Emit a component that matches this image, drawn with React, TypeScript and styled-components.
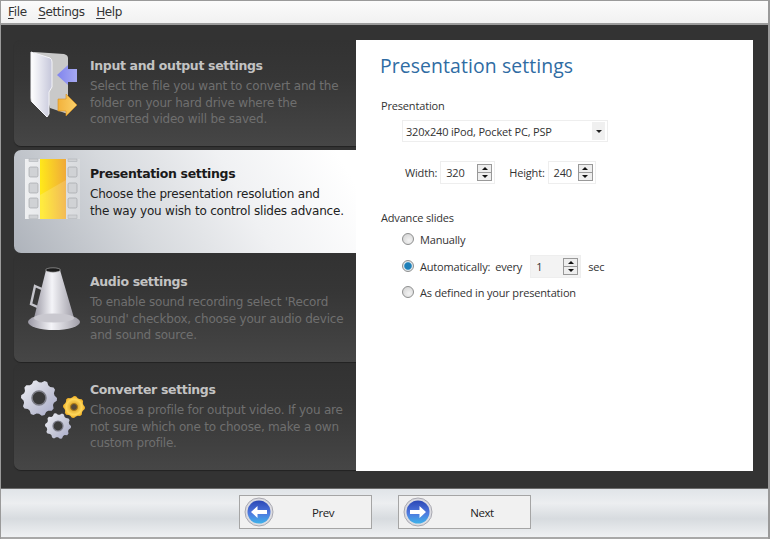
import React from "react";
import styled, { createGlobalStyle } from "styled-components";

const Global = createGlobalStyle`
  html, body { margin: 0; padding: 0; background: #333; }
  #root { width: 770px; height: 539px; }
`;

const Win = styled.div`
  width: 770px; height: 539px; box-sizing: border-box;
  display: flex; flex-direction: column; overflow: hidden;
  border: solid #9a9a9a; border-width: 1px 2px 0 1px;
  font-family: "Open Sans", "Liberation Sans", sans-serif;
  color: #222;
`;
const MenuBar = styled.div`
  height: 22px; flex: none; display: flex; align-items: center; gap: 11.5px;
  padding: 0 0 0 7px;
  background: linear-gradient(#fbfbfb, #f1f1f1);
  border-bottom: 2px solid #9c9c9c;
  font: 12px "DejaVu Sans", sans-serif; letter-spacing: -0.35px; color: #333;
`;
const MenuItem = styled.span`
  & > u { text-underline-offset: 2px; }
`;
const Stage = styled.div`
  flex: none; height: 463px; box-sizing: border-box; display: flex;
  padding: 15px 15px 0 13px; background: #333;
`;
const Side = styled.div`
  width: 342px; flex: none; display: flex; flex-direction: column;
`;
const Card = styled.div<{ $active?: boolean; $h: number; $mt: number }>`
  height: ${p => p.$h}px; margin-top: ${p => p.$mt}px; box-sizing: border-box; flex: none;
  display: flex; border-radius: 7px 0 0 7px;
  background: ${p => p.$active
    ? "linear-gradient(60deg, #aeb3bb 0%, #d6d9dd 35%, #f0f1f3 65%, #ffffff 95%)"
    : "linear-gradient(#323232, #363636 35%, #464646)"};
  box-shadow: ${p => p.$active ? "none" : "0 1px 1px #222"};
`;
const IconSlot = styled.svg`
  width: 76px; flex: none; height: 110px; display: block;
`;
const CardText = styled.div<{ $active?: boolean; $pt: number }>`
  padding-top: ${p => p.$pt}px; white-space: nowrap;
  font: 12px/16.5px "DejaVu Sans", sans-serif; letter-spacing: -0.2px;
  color: ${p => p.$active ? "#222" : "#6f6f6f"};
`;
const CardTitle = styled.div<{ $active?: boolean }>`
  font-weight: 700; font-size: 12.5px; line-height: 18px; margin-bottom: 3px;
  letter-spacing: -0.35px;
  color: ${p => p.$active ? "#1a1a1a" : "#c3c3c3"};
`;
const Panel = styled.div`
  flex: 1; height: 431px; background: #fff; box-sizing: border-box;
  padding: 10px 0 0 24px; font-size: 11px; letter-spacing: -0.17px; color: #333;
`;
const Title = styled.h1`
  margin: 0 0 17px; font: 400 19.4px/31px "Open Sans", sans-serif; color: #2f6ca3;
  letter-spacing: 0.1px;
`;
const Label = styled.div`
  line-height: 16px; padding-left: 1px;
`;
const Select = styled.div`
  margin: 6px 0 0 22px; width: 206px; height: 22px; box-sizing: border-box;
  border: 1px solid #eee; display: flex; align-items: center; justify-content: space-between;
  padding: 0 2px 0 3px;
`;
const Arrow = styled.span`
  width: 13px; height: 18px; background: #f0f0f0; display: flex; align-items: center; justify-content: center;
  &::after { content: ""; border: solid transparent; border-width: 3px 3px 0; border-top-color: #222; }
`;
const SizeRow = styled.div`
  display: flex; align-items: center; margin: 19px 0 0 25px; height: 23px;
`;
const Spin = styled.div<{ $w: number; $ml: number; $mr?: number; $fill?: boolean }>`
  width: ${p => p.$w}px; height: 23px; margin: 0 ${p => p.$mr ?? 0}px 0 ${p => p.$ml}px;
  box-sizing: border-box; border: 1px solid #eee; display: flex; align-items: center;
  justify-content: space-between; padding: 0 2px 0 5px;
  background: ${p => p.$fill ? "#f3f3f3" : "#fff"};
`;
const Stepper = styled.div`
  width: 15px; height: 17px; display: flex; flex-direction: column; border: 1px solid #999; box-sizing: border-box; background: #eee;
`;
const Step = styled.div<{ $down?: boolean }>`
  flex: 1; display: flex; align-items: center; justify-content: center;
  ${p => p.$down ? "border-top: 1px solid #999;" : ""}
  &::after {
    content: ""; border: solid transparent; border-width: ${p => p.$down ? "3px 3px 0" : "0 3px 3px"};
    ${p => p.$down ? "border-top-color: #111;" : "border-bottom-color: #111;"}
  }
`;
const SectionLabel = styled(Label)`
  margin-top: 26px;
`;
const RadioRow = styled.div<{ $mt: number }>`
  display: flex; align-items: center; height: 22px; margin: ${p => p.$mt}px 0 0 22px;
`;
const Radio = styled.span<{ $on?: boolean }>`
  width: 12px; height: 12px; border-radius: 50%; box-sizing: border-box; flex: none; margin-right: 6px;
  border: 1px solid #8e8f8f;
  background: ${p => p.$on
    ? "radial-gradient(circle, #1f7fb8 0 3px, #5aa5cf 3.6px, #dfe6ea 4.2px)"
    : "radial-gradient(circle at 60% 65%, #f3f3f3, #cfcfcf)"};
`;
const Every = styled.span`
  margin-left: 5px;
`;
const Sec = styled.span`
  margin-left: 7px;
`;
const Footer = styled.div`
  flex: 1; display: flex; gap: 26px; padding: 6px 0 0 238px; box-sizing: border-box;
  border-top: 1px solid #6b6b6b; border-bottom: 2px solid #a8a8a8;
  background: linear-gradient(#e0e4e8, #eceef0 30%, #d7dbdf 62%, #eff1f3);
`;
const NavButton = styled.div`
  width: 133px; height: 34px; box-sizing: border-box; border: 1px solid #a5a5a5;
  background: #f1f1f1; display: flex; align-items: center; padding-left: 4px;
  font-size: 11.5px; color: #222; letter-spacing: -0.4px;
`;
const NavLabel = styled.span`
  flex: 1; text-align: center; padding-left: 1px;
`;

function gear(cx: number, cy: number, r: number, teeth: number) {
  const pts: string[] = [];
  const n = teeth * 4;
  for (let i = 0; i < n; i++) {
    const a = (i / n) * Math.PI * 2;
    const R = i % 4 < 2 ? r : r * 0.87;
    pts.push(`${(cx + R * Math.cos(a)).toFixed(1)},${(cy + R * Math.sin(a)).toFixed(1)}`);
  }
  return pts.join(" ");
}

const FolderIcon = () => (
  <IconSlot viewBox="0 0 76 110">
    <defs>
      <linearGradient id="folderLeaf" x1="0" x2="1"><stop offset="0" stopColor="#fff" /><stop offset="1" stopColor="#c5c6da" /></linearGradient>
      <linearGradient id="folderOrange" x1="0" x2="1"><stop offset="0" stopColor="#f2b23c" /><stop offset="1" stopColor="#fbd16a" /></linearGradient>
      <linearGradient id="folderBlue" x1="0" x2="1"><stop offset="0" stopColor="#8084ee" /><stop offset="1" stopColor="#a6a9f2" /></linearGradient>
    </defs>
    <path d="M20 12L50 14Q54 15 54 18L54 74L36 68Z" fill="#c9c9c9" />
    <path d="M17 12L36 18Q38 19 38 22L38 47L35 52L35 74L33 77L18 62Q17 61 17 58Z" fill="url(#folderLeaf)" stroke="#f4f4f8" strokeWidth="1" />
    <path d="M43 35L54 25V29H63V42H54V45Z" fill="url(#folderBlue)" />
    <path d="M63 65L52 54V59H44V71H52V76Z" fill="url(#folderOrange)" stroke="#d68f1e" strokeWidth="0.6" />
  </IconSlot>
);

const holeRows = [17, 33, 48];
const FilmIcon = () => (
  <IconSlot viewBox="0 0 76 110">
    <defs>
      <linearGradient id="film" x1="0" x2="1" y1="0.1" y2="0"><stop offset="0" stopColor="#ffe81a" /><stop offset="1" stopColor="#efa83a" /></linearGradient>
      <linearGradient id="strip" x1="0" x2="1"><stop offset="0" stopColor="#eeeff1" /><stop offset="1" stopColor="#d8dadd" /></linearGradient>
    </defs>
    <rect x="11" y="9" width="55" height="60" fill="url(#strip)" />
    <rect x="26" y="9" width="26" height="60" fill="url(#film)" />
    <path d="M26 45L52 30V69H26Z" fill="#fff" opacity="0.16" />
    {holeRows.map(y => (
      <g key={y} fill="#d0d2d5" stroke="#9b9ea2" strokeWidth="0.6">
        <rect x="15" y={y} width="9" height="10" rx="1.5" />
        <rect x="54" y={y} width="9" height="10" rx="1.5" />
      </g>
    ))}
    <g fill="#d0d2d5" stroke="#a8abaf" strokeWidth="0.5">
      <rect x="15" y="9" width="9" height="2.500" />
      <rect x="54" y="9" width="9" height="2.500" />
      <rect x="15" y="65" width="9" height="3.500" />
      <rect x="54" y="65" width="9" height="3.500" />
    </g>
  </IconSlot>
);

const HornIcon = () => (
  <IconSlot viewBox="0 0 76 110">
    <defs>
      <linearGradient id="horn" x1="0" x2="1"><stop offset="0" stopColor="#9a98a4" /><stop offset="0.45" stopColor="#f4f4f8" /><stop offset="1" stopColor="#a09ea8" /></linearGradient>
    </defs>
    <path d="M21 32L30 36L26 54L17 50Z" fill="none" stroke="#c4c4cb" strokeWidth="2.400" />
    <path d="M32 16H46L60 64H20Z" fill="url(#horn)" />
    <ellipse cx="40" cy="68" rx="26" ry="8" fill="url(#horn)" />
    <ellipse cx="40" cy="64" rx="20" ry="4.500" fill="#c9c8cf" />
    <ellipse cx="39" cy="16" rx="7.500" ry="2.200" fill="#1c1c1c" stroke="#b5b5b5" strokeWidth="0.6" />
  </IconSlot>
);

const GearsIcon = () => (
  <IconSlot viewBox="0 0 76 110">
    <defs>
      <linearGradient id="silverGear" x1="0" x2="1" y1="0" y2="1"><stop offset="0" stopColor="#f0f1f6" /><stop offset="0.55" stopColor="#c6c8d8" /><stop offset="1" stopColor="#a6a9c8" /></linearGradient>
      <radialGradient id="goldGear"><stop offset="0" stopColor="#c98a10" /><stop offset="0.7" stopColor="#ffd75a" /><stop offset="1" stopColor="#eda91e" /></radialGradient>
    </defs>
    <polygon points={gear(25, 34, 18, 10)} fill="url(#silverGear)" />
    <circle cx="25" cy="34" r="7" fill="#3a3a3a" stroke="#7c7d86" strokeWidth="1.500" />
    <polygon points={gear(44, 62, 13, 10)} fill="url(#silverGear)" />
    <circle cx="44" cy="62" r="5" fill="#3c3c3c" stroke="#7c7d8a" strokeWidth="1.200" />
    <polygon points={gear(60, 43, 11, 8)} fill="url(#goldGear)" />
    <circle cx="60" cy="43" r="3.500" fill="#55493a" stroke="#b07c14" strokeWidth="1" />
  </IconSlot>
);

const NavIcon = ({ dir }: { dir: "l" | "r" }) => (
  <svg width="30" height="30" viewBox="0 0 30 30">
    <defs>
      <linearGradient id={`nav-${dir}`} x1="0" x2="0" y1="0" y2="1">
        <stop offset="0" stopColor="#2b47b5" /><stop offset="0.55" stopColor="#4f78de" /><stop offset="1" stopColor="#3fb2ea" />
      </linearGradient>
    </defs>
    <circle cx="15" cy="15" r="14" fill="#dcdce2" stroke="#a9a9b1" strokeWidth="1" />
    <circle cx="15" cy="15" r="11.500" fill={`url(#nav-${dir})`} />
    <path
      d={dir === "l" ? "M7 15L13.500 9V13H23V17H13.500V21Z" : "M23 15L16.500 9V13H7V17H16.500V21Z"}
      fill="#fff"
    />
  </svg>
);

const Spinner = () => (
  <Stepper><Step /><Step $down /></Stepper>
);

export default function App() {
  return (
    <Win>
      <Global />
      <MenuBar>
        <MenuItem><u>F</u>ile</MenuItem>
        <MenuItem><u>S</u>ettings</MenuItem>
        <MenuItem><u>H</u>elp</MenuItem>
      </MenuBar>
      <Stage>
        <Side>
          <Card $h={106} $mt={0}>
            <FolderIcon />
            <CardText $pt={17}>
              <CardTitle>Input and output settings</CardTitle>
              Select the file you want to convert and the<br />
              folder on your hard drive where the<br />
              converted video will be saved.
            </CardText>
          </Card>
          <Card $active $h={103} $mt={4}>
            <FilmIcon />
            <CardText $active $pt={15}>
              <CardTitle $active>Presentation settings</CardTitle>
              Choose the presentation resolution and<br />
              the way you wish to control slides advance.
            </CardText>
          </Card>
          <Card $h={108} $mt={1}>
            <HornIcon />
            <CardText $pt={19}>
              <CardTitle>Audio settings</CardTitle>
              To enable sound recording select 'Record<br />
              sound' checkbox, choose your audio device<br />
              and sound source.
            </CardText>
          </Card>
          <Card $h={106} $mt={2}>
            <GearsIcon />
            <CardText $pt={17}>
              <CardTitle>Converter settings</CardTitle>
              Choose a profile for output video. If you are<br />
              not sure which one to choose, make a own<br />
              custom profile.
            </CardText>
          </Card>
        </Side>
        <Panel>
          <Title>Presentation settings</Title>
          <Label>Presentation</Label>
          <Select>320x240 iPod, Pocket PC, PSP<Arrow /></Select>
          <SizeRow>
            Width:
            <Spin $w={55} $ml={3} $mr={14}>320<Spinner /></Spin>
            Height:
            <Spin $w={48} $ml={3}>240<Spinner /></Spin>
          </SizeRow>
          <SectionLabel>Advance slides</SectionLabel>
          <RadioRow $mt={2}><Radio />Manually</RadioRow>
          <RadioRow $mt={5}>
            <Radio $on />Automatically:
            <Every>every</Every>
            <Spin $w={51} $ml={8} $fill>1<Spinner /></Spin>
            <Sec>sec</Sec>
          </RadioRow>
          <RadioRow $mt={4}><Radio />As defined in your presentation</RadioRow>
        </Panel>
      </Stage>
      <Footer>
        <NavButton><NavIcon dir="l" /><NavLabel>Prev</NavLabel></NavButton>
        <NavButton><NavIcon dir="r" /><NavLabel>Next</NavLabel></NavButton>
      </Footer>
    </Win>
  );
}
